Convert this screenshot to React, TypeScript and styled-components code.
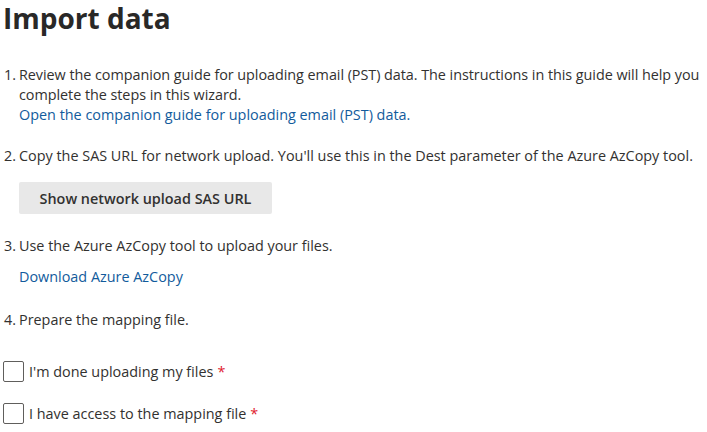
import React from "react";
import styled, { createGlobalStyle } from "styled-components";

const GlobalStyle = createGlobalStyle`
  body {
    margin: 0;
    background: #ffffff;
    font-family: "Open Sans", "Noto Sans", sans-serif;
    color: #323130;
  }
`;

const Page = styled.div`
  padding: 0 0 0 3px;
  width: 707px;
  box-sizing: border-box;
`;

const Title = styled.h1`
  margin: 0;
  font-size: 28px;
  line-height: 36px;
  font-weight: 700;
  color: #292827;
`;

const Steps = styled.ol`
  list-style: none;
  margin: 29px 0 0 1px;
  padding: 0;
  font-size: 14.4px;
  line-height: 20px;
`;

const Step = styled.li<{ $gap?: number }>`
  display: flex;
  margin-bottom: ${(p) => p.$gap ?? 21}px;
`;

const Num = styled.span`
  flex: 0 0 15px;
`;

const Body = styled.div`
  flex: 1;
  display: flex;
  flex-direction: column;
  align-items: flex-start;
`;

const Lines = styled.span`
  white-space: nowrap;
  letter-spacing: -0.05px;
`;

const Link = styled.a<{ $top?: number }>`
  color: #125b9c;
  text-decoration: none;
  margin-top: ${(p) => p.$top ?? 0}px;
  cursor: pointer;
`;

const Button = styled.button`
  margin-top: 16px;
  height: 32px;
  width: 253px;
  border: none;
  border-radius: 2px;
  background: #e8e8e8;
  color: #323130;
  font-family: inherit;
  font-size: 14.4px;
  font-weight: 600;
  padding: 0 20px;
`;

const Checks = styled.div`
  display: flex;
  flex-direction: column;
  gap: 21px;
  margin-top: 31px;
`;

const CheckRow = styled.label`
  display: flex;
  align-items: center;
  font-size: 14.4px;
  line-height: 20px;
`;

const Box = styled.span`
  width: 21px;
  height: 21px;
  box-sizing: border-box;
  border: 1px solid #605e5c;
  border-radius: 2px;
  margin-right: 5px;
`;

const Required = styled.span`
  color: #e0202e;
  margin-left: 4px;
`;

export default function App() {
  return (
    <Page>
      <GlobalStyle />
      <Title>Import data</Title>
      <Steps>
        <Step>
          <Num>1.</Num>
          <Body>
            <Lines>
              Review the companion guide for uploading email (PST) data. The instructions in this guide will help you
              <br />
              complete the steps in this wizard.
            </Lines>
            <Link>Open the companion guide for uploading email (PST) data.</Link>
          </Body>
        </Step>
        <Step $gap={22}>
          <Num>2.</Num>
          <Body>
            <span>Copy the SAS URL for network upload. You'll use this in the Dest parameter of the Azure AzCopy tool.</span>
            <Button>Show network upload SAS URL</Button>
          </Body>
        </Step>
        <Step $gap={23}>
          <Num>3.</Num>
          <Body>
            <span>Use the Azure AzCopy tool to upload your files.</span>
            <Link $top={11}>Download Azure AzCopy</Link>
          </Body>
        </Step>
        <Step $gap={0}>
          <Num>4.</Num>
          <Body>
            <span>Prepare the mapping file.</span>
          </Body>
        </Step>
      </Steps>
      <Checks>
        <CheckRow>
          <Box />
          I'm done uploading my files<Required>*</Required>
        </CheckRow>
        <CheckRow>
          <Box />
          I have access to the mapping file<Required>*</Required>
        </CheckRow>
      </Checks>
    </Page>
  );
}
